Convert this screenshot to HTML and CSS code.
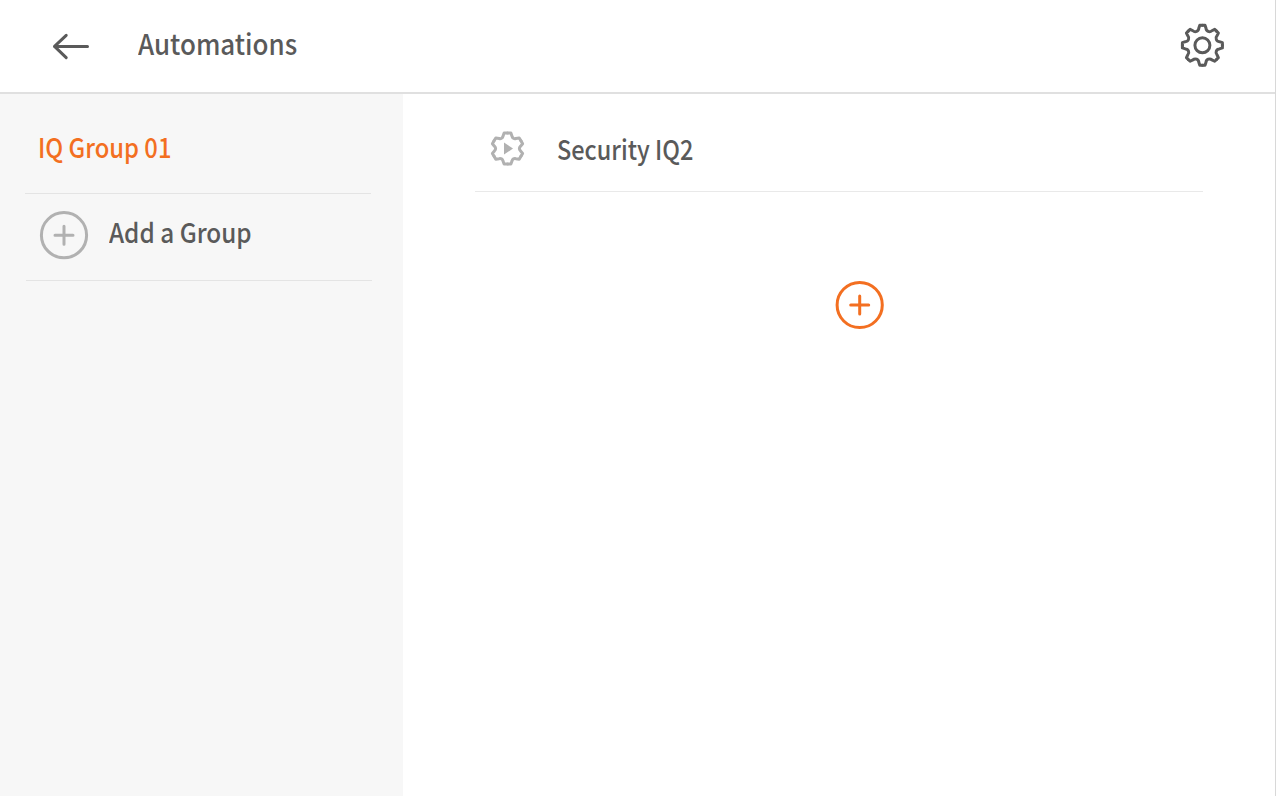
FILE: index.html
```html
<!DOCTYPE html>
<html lang="en">
<head>
<meta charset="utf-8">
<title>Automations</title>
<link rel="stylesheet" href="styles.css">
</head>
<body>
<svg width="0" height="0" class="defs">
  <defs>
    <path id="cog8" d="M0 -20H2.6L3.6 -17A3.5 3.5 0 0 0 9.47 -14.57L12.3 -15.98L14.14 -14.14"/>
    <path id="cog6" d="M0 -15.5H3.4L4.6 -12.2A2.8 2.8 0 0 0 8.27 -10.08L11.72 -10.69L13.42 -7.75"/>
  </defs>
</svg>
<div class="screen">
  <header class="header">
    <svg class="back" width="38" height="28" viewBox="0 0 38 28"><path d="M35.500 14.400H2.500M14.200 3.400L2.500 14.400L14.200 25.700"/></svg>
    <h1 class="label title">Automations</h1>
    <svg class="settings" width="46" height="46" viewBox="-23.400 -23.300 46 46">
      <use href="#cog8"/><use href="#cog8" transform="rotate(45)"/><use href="#cog8" transform="rotate(90)"/><use href="#cog8" transform="rotate(135)"/><use href="#cog8" transform="rotate(180)"/><use href="#cog8" transform="rotate(225)"/><use href="#cog8" transform="rotate(270)"/><use href="#cog8" transform="rotate(315)"/>
      <circle r="7.500"/>
    </svg>
  </header>
  <div class="body">
    <nav class="sidebar">
      <div class="group active"><span class="label group-name">IQ Group 01</span></div>
      <div class="group add">
        <svg class="plus" width="50" height="50" viewBox="-25 -25.200 50 50"><circle r="22.600"/><path d="M-9 0H9M0 -9V9"/></svg>
        <span class="label add-name">Add a Group</span>
      </div>
    </nav>
    <main class="main">
      <div class="automation">
        <svg class="cog" width="36" height="36" viewBox="-18.500 -17.600 36 36">
          <use href="#cog6"/><use href="#cog6" transform="rotate(60)"/><use href="#cog6" transform="rotate(120)"/><use href="#cog6" transform="rotate(180)"/><use href="#cog6" transform="rotate(240)"/><use href="#cog6" transform="rotate(300)"/>
          <path class="play" d="M-3.500 -6L5.500 0L-3.500 6Z"/>
        </svg>
        <span class="label automation-name">Security IQ2</span>
      </div>
      <svg class="plus plus-main" width="50" height="50" viewBox="-24.700 -25 50 50"><circle r="22.600"/><path d="M-9 0H9M0 -9V9"/></svg>
    </main>
  </div>
</div>
</body>
</html>
```
FILE: styles.css
```css
* { box-sizing: border-box; }
body { margin: 0; font-family: "Noto Sans CJK SC", "Open Sans", sans-serif; color: #5a5a5a; background: #fff; }
.defs { display: none; }
svg { display: block; flex: none; fill: none; stroke: #5a5a5a; stroke-width: 3; stroke-linecap: round; stroke-linejoin: round; }
.screen { width: 1276px; height: 796px; display: flex; flex-direction: column; border-right: 1px solid #d8d8d8; overflow: hidden; }
.header { height: 94px; flex: none; display: flex; align-items: center; padding: 0 50px 0 52px; border-bottom: 2px solid #e0e0e0; }
.label { font-weight: 500; white-space: nowrap; line-height: 38px; transform-origin: 0 50%; }
.title { margin: -6px 0 0 48px; font-size: 28px; transform: scaleX(.927); }
.settings { margin: -2px 0 0 auto; }
.body { flex: 1; display: flex; }
.sidebar { width: 403px; background: #f7f7f7; padding-left: 25px; }
.group { width: 346px; display: flex; border-bottom: 1px solid #e4e4e4; }
.active { height: 100px; padding: 34px 0 0 13px; color: #f36f21; }
.group-name { font-size: 27px; transform: scaleX(.88); }
.add { height: 87px; margin-left: 1px; padding: 16px 0 0 13px; }
.add-name { margin: 3px 0 0 20px; font-size: 27px; transform: scaleX(.9); }
.plus { stroke: #b1b1b1; }
.main { flex: 1; padding: 0 72px; display: flex; flex-direction: column; align-items: center; }
.automation { width: 728px; height: 98px; display: flex; padding: 37px 0 0 14px; border-bottom: 1px solid #e9e9e9; }
.cog { stroke: #b1b1b1; }
.cog .play { fill: #b1b1b1; stroke: none; }
.automation-name { margin: -1px 0 0 32px; font-size: 27px; transform: scaleX(.87); }
.plus-main { margin: 88px 0 0 41px; stroke: #f36f21; }
```
